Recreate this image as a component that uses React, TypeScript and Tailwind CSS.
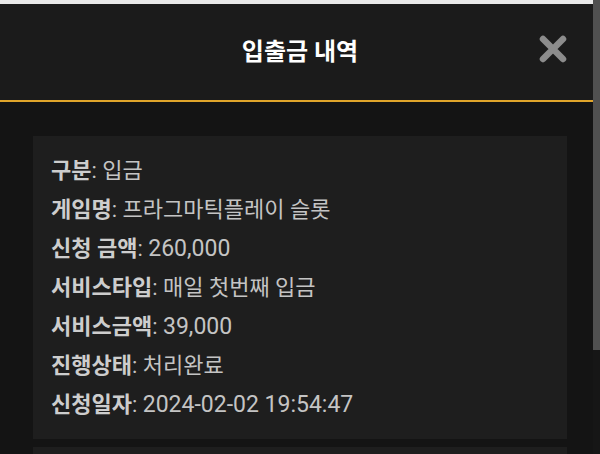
const rows: { label: string; value: string; num?: boolean }[] = [
  { label: "구분", value: "입금" },
  { label: "게임명", value: "프라그마틱플레이 슬롯" },
  { label: "신청 금액", value: "260,000", num: true },
  { label: "서비스타입", value: "매일 첫번째 입금" },
  { label: "서비스금액", value: "39,000", num: true },
  { label: "진행상태", value: "처리완료" },
  { label: "신청일자", value: "2024-02-02 19:54:47", num: true },
];

export default function App() {
  return (
    <div
      className="flex h-[454px] w-[600px] overflow-hidden bg-[#141414]"
      style={{ fontFamily: "Roboto, 'Noto Sans CJK KR', sans-serif" }}
    >
      <div className="flex-1 flex flex-col">
        <div className="h-[4px] shrink-0 bg-[#e9e9e9]" />
        <header className="relative flex h-[98px] shrink-0 items-center justify-center bg-[#1b1b1b] border-b-2 border-[#e0a52b]">
          <h1 className="pl-[7px] text-[24px] font-bold text-white">입출금 내역</h1>
          {/* close button */}
          <button className="absolute right-[26px] top-[31px] h-[28px] w-[28px]" aria-label="닫기">
            <svg viewBox="0 0 28 28" className="h-[28px] w-[28px]">
              <path d="M4 4L24 24M24 4L4 24" stroke="#8c8c8c" strokeWidth={6.5} strokeLinecap="round" />
            </svg>
          </button>
        </header>
        <div className="shrink-0 pl-[33px] pt-[34px]">
          <div className="w-[534px] bg-[#1e1e1e] pl-[18px] pt-[15px] pb-[15px]">
            {rows.map((r) => (
              <div key={r.label} className="h-[39px] leading-[39px] text-[22px] text-[#c4c4c4] whitespace-nowrap">
                <span className="font-bold text-[#cdcdcd]">{r.label}</span>
                <span>: </span>
                <span className={r.num ? "text-[23px]" : ""}>{r.value}</span>
              </div>
            ))}
          </div>
          <div className="mt-[8px] h-[40px] w-[534px] bg-[#1e1e1e]" />
        </div>
      </div>
      {/* scrollbar */}
      <div className="w-[7px] flex flex-col">
        <div className="h-[350px] shrink-0 bg-[#505050]" />
        <div className="flex-1 bg-[#161616]" />
      </div>
    </div>
  );
}
